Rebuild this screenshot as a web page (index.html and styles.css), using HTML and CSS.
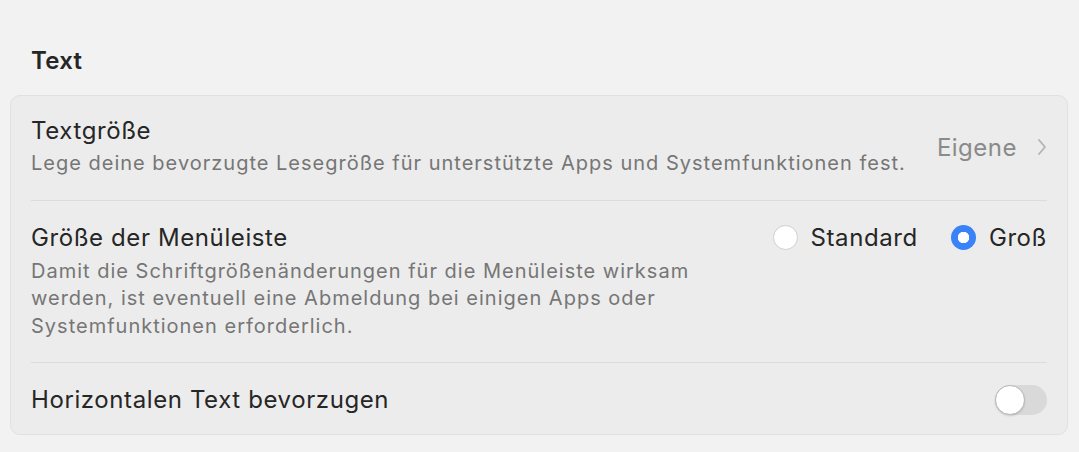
FILE: index.html
```html
<!DOCTYPE html>
<html lang="de">
<head>
    <meta charset="UTF-8">
    <meta name="viewport" content="width=device-width, initial-scale=1.0">
    <title>Text</title>
    <link rel="stylesheet" href="styles.css">
</head>
<body>

    <div class="pane">
        <h2 class="section-title">Text</h2>

        <div class="group">
            <!-- Textgröße -->
            <div class="row row-size">
                <div class="row-text">
                    <div class="row-title">Textgröße</div>
                    <div class="row-desc">Lege deine bevorzugte Lesegröße für unterstützte Apps und Systemfunktionen fest.</div>
                </div>
                <div class="row-value">
                    <span>Eigene</span>
                    <svg class="chevron" width="10" height="18" viewBox="0 0 10 18">
                        <path d="M2 2 L8 9 L2 16" fill="none" stroke="#b3b3b3" stroke-width="1.8" stroke-linecap="round" stroke-linejoin="round"/>
                    </svg>
                </div>
            </div>

            <!-- Menüleiste -->
            <div class="row row-menu">
                <div class="row-text narrow">
                    <div class="row-title">Größe der Menüleiste</div>
                    <div class="row-desc">Damit die Schriftgrößenänderungen für die Menüleiste wirksam werden, ist eventuell eine Abmeldung bei einigen Apps oder Systemfunktionen erforderlich.</div>
                </div>
                <div class="radios">
                    <label class="radio"><span class="dot"></span>Standard</label>
                    <label class="radio"><span class="dot on"></span>Groß</label>
                </div>
            </div>

            <!-- Horizontal -->
            <div class="row row-horiz">
                <div class="row-text">
                    <div class="row-title">Horizontalen Text bevorzugen</div>
                </div>
                <div class="toggle"><span class="knob"></span></div>
            </div>
        </div>
    </div>

</body>
</html>
```

FILE: styles.css
```css
/* General */
body {
    margin: 0;
    background-color: #f2f2f2;
    font-family: Inter, "Noto Sans", sans-serif;
    color: #262626;
}

.pane {
    padding: 47px 11px 0 10px;
}

.section-title {
    margin: 0 0 20px 21px;
    font-size: 24px;
    font-weight: 600;
    line-height: 28px;
    letter-spacing: 0.3px;
}

/* Grouped box */
.group {
    background-color: #ececec;
    border: 1px solid #e0e0e0;
    border-radius: 10px;
    padding: 0 20px;
}

.row {
    display: flex;
    align-items: center;
    justify-content: space-between;
    border-top: 1px solid #dcdcdc;
}

.row-size {
    border-top: none;
    padding: 21px 0 22px;
}

.row-menu {
    align-items: flex-start;
    padding: 23px 0 22px;
}

.row-horiz {
    padding: 22px 0 19px;
}

.row-title {
    font-size: 24px;
    line-height: 28px;
    letter-spacing: 0.6px;
}

.row-desc {
    margin-top: 5px;
    font-size: 20px;
    line-height: 27.5px;
    letter-spacing: 1px;
    color: #767676;
}

.row-menu .row-desc {
    margin-top: 6px;
}

.narrow {
    max-width: 700px;
}

.row-value {
    display: flex;
    align-items: center;
    gap: 20px;
    font-size: 24px;
    letter-spacing: 0.5px;
    color: #8a8a8a;
}

/* Radio buttons */
.radios {
    display: flex;
    gap: 33px;
}

.radio {
    display: flex;
    align-items: center;
    gap: 13px;
    font-size: 24px;
    line-height: 28px;
    letter-spacing: 0.6px;
}

.dot {
    width: 25px;
    height: 25px;
    box-sizing: border-box;
    border-radius: 50%;
    background: #fff;
    border: 1px solid #cfcfcf;
}

.dot.on {
    border: none;
    background: radial-gradient(circle, #fff 0 5.5px, #3a82f7 6px);
}

/* Switch */
.toggle {
    width: 52px;
    height: 30px;
    border-radius: 15px;
    background: #d9d9d9;
    position: relative;
}

.knob {
    position: absolute;
    left: 0;
    top: 0;
    width: 28px;
    height: 28px;
    border-radius: 50%;
    background: #fff;
    border: 1px solid #b8b8b8;
    box-shadow: 0 1px 2px rgba(0,0,0,0.15);
}
```
